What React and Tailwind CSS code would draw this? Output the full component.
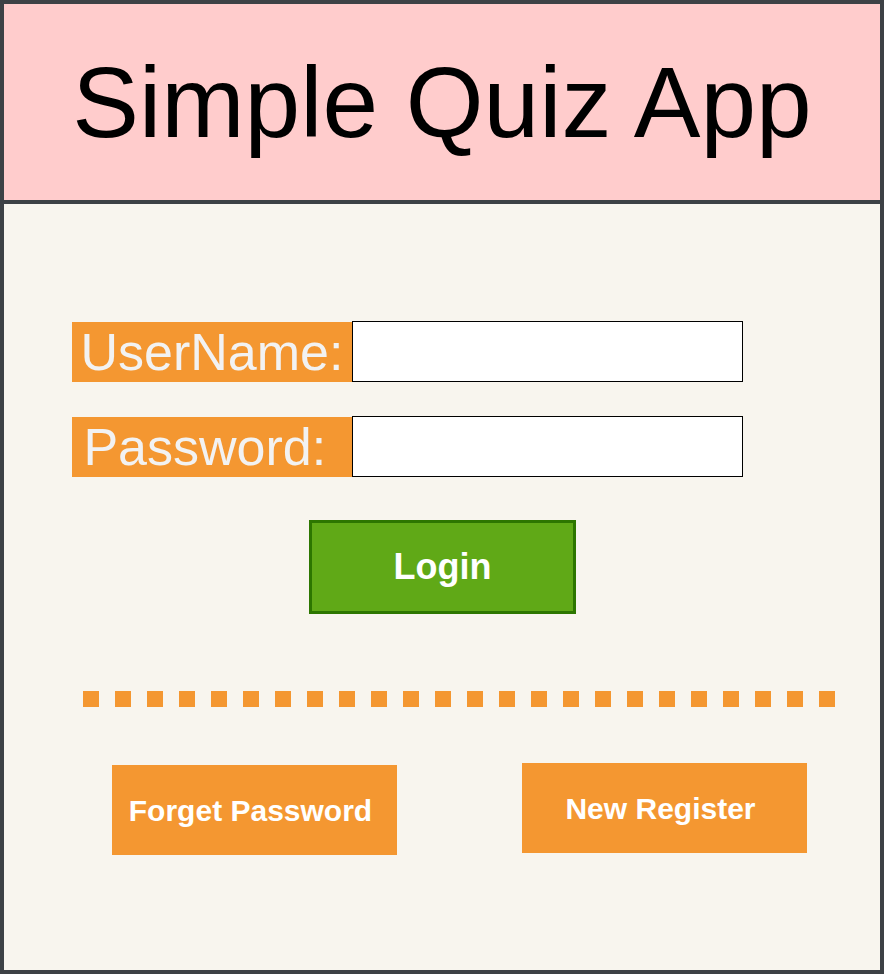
import React from "react";

const dots = Array.from({ length: 24 }, (_, i) => i);

const App = () => {
    return (
        <div className="w-[885px] h-[975px] bg-white" style={{ fontFamily: '"Liberation Sans", Arial, sans-serif' }}>
            <div className="w-[884px] h-[974px] border-4 border-[#3d4145] flex flex-col bg-[#f8f5ee]">
                {/* header */}
                <div className="h-[200px] shrink-0 bg-[#ffcccc] border-b-4 border-[#3d4145] flex items-center justify-center">
                    <h1 className="text-[100px] leading-none text-black">Simple Quiz App</h1>
                </div>

                {/* login form */}
                <div className="flex flex-col pt-[117px]">
                    <div className="flex items-center pl-[68px]">
                        <div className="w-[280px] h-[60px] bg-[#f49731] text-[#f2f2f2] text-[52px] leading-none flex items-center justify-center">
                            UserName:
                        </div>
                        <input className="w-[391px] h-[61px] bg-white border border-black outline-none" />
                    </div>
                    <div className="flex items-center pl-[68px] mt-[34px]">
                        <div className="w-[280px] h-[60px] bg-[#f49731] text-[#f2f2f2] text-[52px] leading-none flex items-center justify-center">
                            {"Password:\u00a0"}
                        </div>
                        <input type="password" className="w-[391px] h-[61px] bg-white border border-black outline-none" />
                    </div>

                    <button className="mt-[43px] ml-[305px] w-[267px] h-[94px] bg-[#60a917] border-[3px] border-[#2d7600] text-white font-bold text-[36px] flex items-center justify-center">
                        Login
                    </button>

                    <div className="mt-[77px] ml-[79px] flex gap-4">
                        {dots.map((d) => (
                            <div key={d} className="w-4 h-4 bg-[#f49731]" />
                        ))}
                    </div>

                    <div className="flex items-start ml-[108px] mt-[56px]">
                        <button className="mt-[2px] w-[285px] h-[90px] bg-[#f49731] text-white font-bold text-[30px] pr-2 flex items-center justify-center">
                            Forget Password
                        </button>
                        <button className="ml-[125px] w-[285px] h-[90px] bg-[#f49731] text-white font-bold text-[30px] pr-2 flex items-center justify-center">
                            New Register
                        </button>
                    </div>
                </div>
            </div>
        </div>
    );
};

export default App;
